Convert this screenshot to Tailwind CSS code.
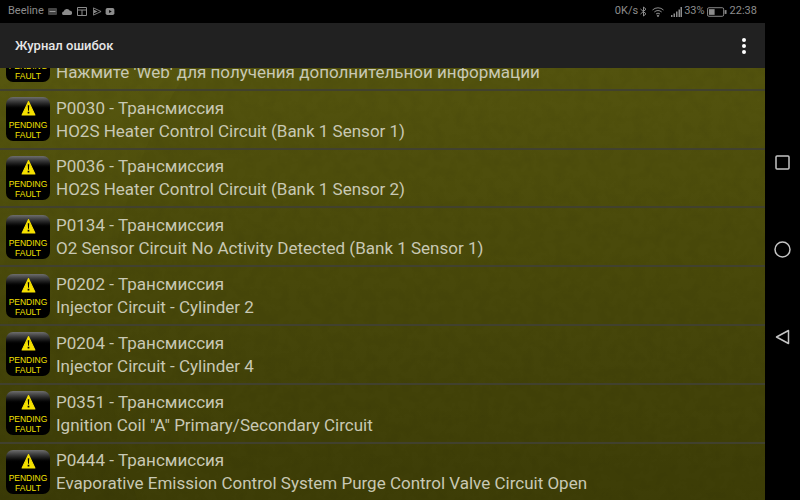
<!DOCTYPE html>
<html lang="ru">
<head>
  <meta charset="UTF-8" />
  <title>Журнал ошибок</title>
  <script src="https://cdn.jsdelivr.net/npm/@tailwindcss/browser@4"></script>
</head>
<body class="w-[800px] h-[500px] overflow-hidden bg-black font-['Roboto',sans-serif] flex flex-col">

  <!-- Status bar -->
  <div class="h-[23px] shrink-0 flex items-center justify-between text-[11px] text-[#8c8c8c] pl-2 pr-[43px]">
    <div class="flex items-center">
      <span>Beeline</span>
      <svg class="w-[9px] h-[7px] ml-[4px]" viewBox="0 0 9 7"><rect width="9" height="7" rx="1" fill="#444"/><path d="M1.500 3.500h6" stroke="#999"/></svg>
      <svg class="w-[10px] h-[7px] ml-[5px]" viewBox="0 0 11 8"><path d="M2 8a2 2 0 0 1-.3-4A3.800 3.800 0 0 1 8.800 3.200 2.400 2.400 0 0 1 9 8z" fill="#8c8c8c"/></svg>
      <svg class="w-[10px] h-[9px] ml-[5px]" viewBox="0 0 10 9"><path d="M.5.5h9v8h-9zM.5 3h9M5 3v5.500" fill="none" stroke="#8c8c8c"/></svg>
      <svg class="w-[9px] h-[9px] ml-[6px]" viewBox="0 0 10 9"><path d="M.5.5 9 4.500.5 8.500z" fill="none" stroke="#8c8c8c"/><path d="M1 2.500 5 4.500 1 6.500z" fill="#8c8c8c"/></svg>
      <svg class="w-[10px] h-[7px] ml-[3px]" viewBox="0 0 10 8"><rect width="10" height="8" rx="2" fill="#8c8c8c"/><path d="M4 2.200 7 4 4 5.800z" fill="#000"/></svg>
    </div>
    <div class="flex items-center">
      <span>0K/s</span>
      <svg class="w-[7px] h-[11px] ml-[2px]" viewBox="0 0 7 11"><path d="M.5 3 6 7.800 3.500 10V1L6 3.200.5 8" fill="none" stroke="#8c8c8c"/></svg>
      <svg class="w-[12px] h-[10px] ml-[5px]" viewBox="0 0 12 10" fill="none" stroke="#8c8c8c"><path d="M.5 3a8 8 0 0 1 11 0M2.300 5a5.400 5.400 0 0 1 7.400 0M4 7a3 3 0 0 1 4 0"/><circle cx="6" cy="8.800" r=".7" fill="#8c8c8c"/></svg>
      <svg class="w-[11px] h-[10px] ml-[7px]" viewBox="0 0 11 10" fill="#8c8c8c"><path d="M0 8h1.500v2H0zM2.500 6.500H4V10H2.500zM5 4.500h1.500V10H5zM7.500 2.500H9V10H7.500zM9.500 0H11v10H9.500z"/></svg>
      <span class="ml-[2px]">33%</span>
      <svg class="w-[20px] h-[10px] ml-[2px]" viewBox="0 0 21 10"><rect x=".5" y=".5" width="17" height="9" rx="1.500" fill="none" stroke="#8c8c8c"/><rect x="2" y="2" width="6" height="6" fill="#8c8c8c"/><rect x="18.500" y="3" width="2" height="4" fill="#8c8c8c"/></svg>
      <span class="ml-[3px]">22:38</span>
    </div>
  </div>

  <div class="flex flex-1 min-h-0">
    <!-- Main -->
    <div class="w-[765px] flex flex-col min-h-0">
      <header class="h-[45px] shrink-0 flex items-center justify-between bg-[#212121] pl-[15px] pr-[19px]">
        <h1 class="text-[13px] font-medium text-[#e6e6e6]">Журнал ошибок</h1>
        <div class="flex flex-col gap-[2px]">
          <span class="w-[4px] h-[4px] rounded-full bg-white"></span>
          <span class="w-[4px] h-[4px] rounded-full bg-white"></span>
          <span class="w-[4px] h-[4px] rounded-full bg-white"></span>
        </div>
      </header>

      <div class="relative flex-1 min-h-0 overflow-hidden bg-linear-to-b from-[#57570f] to-[#3b3b07]">
        <!-- background disc of the wallpaper -->
        <div class="absolute left-[108px] top-[-211px] w-[956px] h-[956px] rounded-full bg-[#45450c]/20"></div>
        <!-- wallpaper grain -->
        <svg class="absolute inset-0 w-full h-full opacity-[0.04]">
          <filter id="grain"><feTurbulence type="fractalNoise" baseFrequency="0.09" numOctaves="3" seed="4"/><feColorMatrix values="0 0 0 0 0 0 0 0 0 0 0 0 0 0 0 0 0 0 1.800 -0.700"/></filter>
          <rect width="100%" height="100%" filter="url(#grain)"/>
        </svg>

        <ul class="relative mt-[-36px] text-[#c8c8b4] text-[17px] leading-[23px]">
          <li class="h-[58.800px] flex items-center gap-[6px] pl-[6px] border-b-2 border-[#41412e]">
            <div class="w-[44px] h-[44px] shrink-0 rounded-[7px] bg-linear-to-b from-[#6e6e6e] via-black via-30% to-black flex flex-col items-center pt-[3px] text-[#f2e000] text-[8.500px] leading-[10px] font-['Liberation_Sans',sans-serif]">
              <svg class="w-[15px] h-[16px]" viewBox="0 0 14 15"><path d="M7 1.500 13 14H1z" fill="#f5e000" stroke="#f5e000" stroke-linejoin="round"/><path d="M6.300 5h1.400l-.3 5h-.8z M6.200 11h1.600v1.700H6.200z" fill="#000"/></svg>
              <span class="mt-[4px]">PENDING</span><span>FAULT</span>
            </div>
            <div class="pt-[1px]"><div class="h-[23px]"></div><p>Нажмите 'Web' для получения дополнительной информации</p></div>
          </li>
          <li class="h-[58.800px] flex items-center gap-[6px] pl-[6px] border-b-2 border-[#41412e]">
            <div class="w-[44px] h-[44px] shrink-0 rounded-[7px] bg-linear-to-b from-[#6e6e6e] via-black via-30% to-black flex flex-col items-center pt-[3px] text-[#f2e000] text-[8.500px] leading-[10px] font-['Liberation_Sans',sans-serif]">
              <svg class="w-[15px] h-[16px]" viewBox="0 0 14 15"><path d="M7 1.500 13 14H1z" fill="#f5e000" stroke="#f5e000" stroke-linejoin="round"/><path d="M6.300 5h1.400l-.3 5h-.8z M6.200 11h1.600v1.700H6.200z" fill="#000"/></svg>
              <span class="mt-[4px]">PENDING</span><span>FAULT</span>
            </div>
            <div class="pt-[1px]"><p>P0030 - Трансмиссия</p><p>HO2S Heater Control Circuit (Bank 1 Sensor 1)</p></div>
          </li>
          <li class="h-[58.800px] flex items-center gap-[6px] pl-[6px] border-b-2 border-[#41412e]">
            <div class="w-[44px] h-[44px] shrink-0 rounded-[7px] bg-linear-to-b from-[#6e6e6e] via-black via-30% to-black flex flex-col items-center pt-[3px] text-[#f2e000] text-[8.500px] leading-[10px] font-['Liberation_Sans',sans-serif]">
              <svg class="w-[15px] h-[16px]" viewBox="0 0 14 15"><path d="M7 1.500 13 14H1z" fill="#f5e000" stroke="#f5e000" stroke-linejoin="round"/><path d="M6.300 5h1.400l-.3 5h-.8z M6.200 11h1.600v1.700H6.200z" fill="#000"/></svg>
              <span class="mt-[4px]">PENDING</span><span>FAULT</span>
            </div>
            <div class="pt-[1px]"><p>P0036 - Трансмиссия</p><p>HO2S Heater Control Circuit (Bank 1 Sensor 2)</p></div>
          </li>
          <li class="h-[58.800px] flex items-center gap-[6px] pl-[6px] border-b-2 border-[#41412e]">
            <div class="w-[44px] h-[44px] shrink-0 rounded-[7px] bg-linear-to-b from-[#6e6e6e] via-black via-30% to-black flex flex-col items-center pt-[3px] text-[#f2e000] text-[8.500px] leading-[10px] font-['Liberation_Sans',sans-serif]">
              <svg class="w-[15px] h-[16px]" viewBox="0 0 14 15"><path d="M7 1.500 13 14H1z" fill="#f5e000" stroke="#f5e000" stroke-linejoin="round"/><path d="M6.300 5h1.400l-.3 5h-.8z M6.200 11h1.600v1.700H6.200z" fill="#000"/></svg>
              <span class="mt-[4px]">PENDING</span><span>FAULT</span>
            </div>
            <div class="pt-[1px]"><p>P0134 - Трансмиссия</p><p>O2 Sensor Circuit No Activity Detected (Bank 1 Sensor 1)</p></div>
          </li>
          <li class="h-[58.800px] flex items-center gap-[6px] pl-[6px] border-b-2 border-[#41412e]">
            <div class="w-[44px] h-[44px] shrink-0 rounded-[7px] bg-linear-to-b from-[#6e6e6e] via-black via-30% to-black flex flex-col items-center pt-[3px] text-[#f2e000] text-[8.500px] leading-[10px] font-['Liberation_Sans',sans-serif]">
              <svg class="w-[15px] h-[16px]" viewBox="0 0 14 15"><path d="M7 1.500 13 14H1z" fill="#f5e000" stroke="#f5e000" stroke-linejoin="round"/><path d="M6.300 5h1.400l-.3 5h-.8z M6.200 11h1.600v1.700H6.200z" fill="#000"/></svg>
              <span class="mt-[4px]">PENDING</span><span>FAULT</span>
            </div>
            <div class="pt-[1px]"><p>P0202 - Трансмиссия</p><p>Injector Circuit - Cylinder 2</p></div>
          </li>
          <li class="h-[58.800px] flex items-center gap-[6px] pl-[6px] border-b-2 border-[#41412e]">
            <div class="w-[44px] h-[44px] shrink-0 rounded-[7px] bg-linear-to-b from-[#6e6e6e] via-black via-30% to-black flex flex-col items-center pt-[3px] text-[#f2e000] text-[8.500px] leading-[10px] font-['Liberation_Sans',sans-serif]">
              <svg class="w-[15px] h-[16px]" viewBox="0 0 14 15"><path d="M7 1.500 13 14H1z" fill="#f5e000" stroke="#f5e000" stroke-linejoin="round"/><path d="M6.300 5h1.400l-.3 5h-.8z M6.200 11h1.600v1.700H6.200z" fill="#000"/></svg>
              <span class="mt-[4px]">PENDING</span><span>FAULT</span>
            </div>
            <div class="pt-[1px]"><p>P0204 - Трансмиссия</p><p>Injector Circuit - Cylinder 4</p></div>
          </li>
          <li class="h-[58.800px] flex items-center gap-[6px] pl-[6px] border-b-2 border-[#41412e]">
            <div class="w-[44px] h-[44px] shrink-0 rounded-[7px] bg-linear-to-b from-[#6e6e6e] via-black via-30% to-black flex flex-col items-center pt-[3px] text-[#f2e000] text-[8.500px] leading-[10px] font-['Liberation_Sans',sans-serif]">
              <svg class="w-[15px] h-[16px]" viewBox="0 0 14 15"><path d="M7 1.500 13 14H1z" fill="#f5e000" stroke="#f5e000" stroke-linejoin="round"/><path d="M6.300 5h1.400l-.3 5h-.8z M6.200 11h1.600v1.700H6.200z" fill="#000"/></svg>
              <span class="mt-[4px]">PENDING</span><span>FAULT</span>
            </div>
            <div class="pt-[1px]"><p>P0351 - Трансмиссия</p><p>Ignition Coil "A" Primary/Secondary Circuit</p></div>
          </li>
          <li class="h-[58.800px] flex items-center gap-[6px] pl-[6px] border-b-2 border-[#41412e]">
            <div class="w-[44px] h-[44px] shrink-0 rounded-[7px] bg-linear-to-b from-[#6e6e6e] via-black via-30% to-black flex flex-col items-center pt-[3px] text-[#f2e000] text-[8.500px] leading-[10px] font-['Liberation_Sans',sans-serif]">
              <svg class="w-[15px] h-[16px]" viewBox="0 0 14 15"><path d="M7 1.500 13 14H1z" fill="#f5e000" stroke="#f5e000" stroke-linejoin="round"/><path d="M6.300 5h1.400l-.3 5h-.8z M6.200 11h1.600v1.700H6.200z" fill="#000"/></svg>
              <span class="mt-[4px]">PENDING</span><span>FAULT</span>
            </div>
            <div class="pt-[1px]"><p>P0444 - Трансмиссия</p><p>Evaporative Emission Control System Purge Control Valve Circuit Open</p></div>
          </li>
        </ul>
      </div>
    </div>

    <!-- Nav bar -->
    <div class="flex-1 flex flex-col items-center pt-[132px] gap-[71px]">
      <svg class="w-[15px] h-[15px]" viewBox="0 0 15 15"><rect x="1" y="1" width="13" height="13" rx="1" fill="none" stroke="#c4c4c4" stroke-width="1.500"/></svg>
      <svg class="w-[17px] h-[17px]" viewBox="0 0 17 17"><circle cx="8.500" cy="8.500" r="7.500" fill="none" stroke="#c4c4c4" stroke-width="1.500"/></svg>
      <svg class="w-[15px] h-[16px]" viewBox="0 0 15 16"><path d="M13.500 1.500v13L1.500 8z" fill="none" stroke="#c4c4c4" stroke-width="1.500" stroke-linejoin="round"/></svg>
    </div>
  </div>
</body>
</html>
